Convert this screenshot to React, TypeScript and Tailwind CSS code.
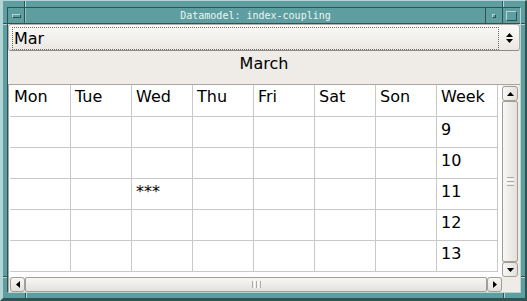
import React from 'react';

const days = ['Mon', 'Tue', 'Wed', 'Thu', 'Fri', 'Sat', 'Son', 'Week'];
const weeks = [9, 10, 11, 12, 13];

function UpArrow() {
  return (
    <svg width="7" height="4" viewBox="0 0 7 4" className="block">
      <path d="M0 4 L3.5 0 L7 4 Z" fill="#000" />
    </svg>
  );
}
function DownArrow() {
  return (
    <svg width="7" height="4" viewBox="0 0 7 4" className="block">
      <path d="M0 0 L3.5 4 L7 0 Z" fill="#000" />
    </svg>
  );
}
function LeftArrow() {
  return (
    <svg width="4" height="7" viewBox="0 0 4 7" className="block">
      <path d="M4 0 L0 3.5 L4 7 Z" fill="#000" />
    </svg>
  );
}
function RightArrow() {
  return (
    <svg width="4" height="7" viewBox="0 0 4 7" className="block">
      <path d="M0 0 L4 3.5 L0 7 Z" fill="#000" />
    </svg>
  );
}

export default function App() {
  return (
    <div className="relative w-[527px] h-[301px] overflow-hidden bg-[#5f9ea0] border-t border-l-[3px] border-r-2 border-b-[3px] border-t-[#b4d5d6] border-l-[#b4d5d6] border-r-[#2f5354] border-b-[#2f5354] pt-[6px] pl-[4px] pr-[4px] pb-[5px] font-['DejaVu_Sans',sans-serif]">
      {/* frame corner grooves */}
      <span className="absolute left-[21px] top-[-1px] h-[7px] w-[1px] bg-[#2f5354]" />
      <span className="absolute left-[22px] top-[-1px] h-[7px] w-[1px] bg-[#b4d5d6]" />
      <span className="absolute left-[499px] top-[-1px] h-[7px] w-[1px] bg-[#2f5354]" />
      <span className="absolute left-[500px] top-[-1px] h-[7px] w-[1px] bg-[#b4d5d6]" />
      <span className="absolute left-[22px] bottom-[-3px] h-[8px] w-[1px] bg-[#2f5354]" />
      <span className="absolute left-[23px] bottom-[-3px] h-[8px] w-[1px] bg-[#b4d5d6]" />
      <span className="absolute left-[500px] bottom-[-3px] h-[8px] w-[1px] bg-[#2f5354]" />
      <span className="absolute left-[501px] bottom-[-3px] h-[8px] w-[1px] bg-[#b4d5d6]" />
      <span className="absolute left-[-3px] top-[22px] h-[1px] w-[7px] bg-[#2f5354]" />
      <span className="absolute left-[-3px] top-[23px] h-[1px] w-[7px] bg-[#b4d5d6]" />
      <span className="absolute left-[-3px] top-[275px] h-[1px] w-[7px] bg-[#2f5354]" />
      <span className="absolute left-[-3px] top-[276px] h-[1px] w-[7px] bg-[#b4d5d6]" />
      <span className="absolute right-[-2px] top-[22px] h-[1px] w-[6px] bg-[#2f5354]" />
      <span className="absolute right-[-2px] top-[23px] h-[1px] w-[6px] bg-[#b4d5d6]" />
      <span className="absolute right-[-2px] top-[275px] h-[1px] w-[6px] bg-[#2f5354]" />
      <span className="absolute right-[-2px] top-[276px] h-[1px] w-[6px] bg-[#b4d5d6]" />

      <div className="flex h-full flex-col border border-t-[#2f5354] border-l-[#2f5354] border-r-[#b4d5d6] border-b-[#b4d5d6]">
        {/* title bar */}
        <div className="flex h-[16px] shrink-0 border-b border-[#2f5354]">
          <div className="flex w-[17px] items-center justify-center border-r border-[#2f5354]">
            <div className="h-[4px] w-[9px] border border-t-[#b4d5d6] border-l-[#b4d5d6] border-r-[#2f5354] border-b-[#2f5354]" />
          </div>
          <div className="flex w-[460px] items-center justify-center border-l border-[#8fc0c2] font-['DejaVu_Sans_Mono',monospace] text-[10px] leading-none text-[#e8f6f6]">
            Datamodel: index-coupling
          </div>
          <div className="flex w-[17px] items-center justify-center border-l border-[#2f5354]">
            <div className="h-[4px] w-[4px] border border-t-[#b4d5d6] border-l-[#b4d5d6] border-r-[#2f5354] border-b-[#2f5354]" />
          </div>
          <div className="flex w-[18px] items-center justify-center border-l border-[#2f5354]">
            <div className="h-[10px] w-[11px] border border-t-[#b4d5d6] border-l-[#b4d5d6] border-r-[#2f5354] border-b-[#2f5354]" />
          </div>
        </div>

        {/* content */}
        <div className="flex flex-1 flex-col bg-[#efebe7] text-[16px] text-black">
          {/* combo */}
          <div className="flex h-[27px] shrink-0 items-start rounded-[3px] border border-[#b3afa8] border-b-[#8f8b85] bg-gradient-to-b from-[#fbfaf8] to-[#ebe8e3]">
            <div className="ml-[3px] mt-[2px] flex h-[23px] flex-1 items-center border border-dotted border-[#6a6a6a] pl-[1px] leading-[19px]">
              Mar
            </div>
            <div className="flex h-full w-[20px] flex-col items-center justify-center gap-[2px]">
              <UpArrow />
              <DownArrow />
            </div>
          </div>

          {/* month header */}
          <div className="flex h-[33px] shrink-0 justify-center pt-[3px] leading-[19px]">March</div>

          {/* table section */}
          <div className="grid flex-1 grid-cols-[493px_16px_1fr] grid-rows-[192px_15px] border-t border-l border-[#aaa69f]">
            {/* viewport */}
            <div className="overflow-hidden bg-white pl-[1px]">
              <div className="grid grid-cols-[repeat(8,61px)]">
                {days.map((d) => (
                  <div
                    key={d}
                    className="h-[32px] border-r border-b border-[#c8c8c8] pl-[4px] pt-[2px] leading-[19px]"
                  >
                    {d}
                  </div>
                ))}
                {weeks.map((w) =>
                  days.map((d) => (
                    <div
                      key={`${w}-${d}`}
                      className="h-[31px] border-r border-b border-[#c8c8c8] pl-[4px] pt-[3px] leading-[19px]"
                    >
                      {d === 'Week' ? w : w === 11 && d === 'Wed' ? '***' : ''}
                    </div>
                  ))
                )}
              </div>
            </div>

            {/* vertical scrollbar */}
            <div className="flex flex-col pt-[1px]">
              <div className="flex h-[15px] shrink-0 items-center justify-center rounded-[3px] border border-[#a29e97] bg-gradient-to-r from-[#f8f7f5] to-[#e4e1dc]">
                <UpArrow />
              </div>
              <div className="flex flex-1 flex-col items-center justify-center gap-[1px] rounded-[2px] border border-[#a29e97] bg-gradient-to-r from-[#f8f7f5] to-[#e4e1dc]">
                <div className="h-[1px] w-[7px] bg-[#b0aca5]" />
                <div className="h-[1px] w-[7px] bg-white" />
                <div className="h-[1px] w-[7px] bg-[#b0aca5]" />
                <div className="h-[1px] w-[7px] bg-white" />
                <div className="h-[1px] w-[7px] bg-[#b0aca5]" />
              </div>
              <div className="flex h-[15px] shrink-0 items-center justify-center rounded-[3px] border border-[#a29e97] bg-gradient-to-r from-[#f8f7f5] to-[#e4e1dc]">
                <DownArrow />
              </div>
            </div>
            <div />

            {/* horizontal scrollbar */}
            <div className="flex pl-[1px]">
              <div className="flex w-[15px] shrink-0 items-center justify-center rounded-[3px] border border-[#a29e97] bg-gradient-to-b from-[#f8f7f5] to-[#e4e1dc]">
                <LeftArrow />
              </div>
              <div className="flex flex-1 items-center justify-center gap-[1px] rounded-[2px] border border-[#a29e97] bg-gradient-to-b from-[#f8f7f5] to-[#e4e1dc]">
                <div className="h-[7px] w-[1px] bg-[#b0aca5]" />
                <div className="h-[7px] w-[1px] bg-white" />
                <div className="h-[7px] w-[1px] bg-[#b0aca5]" />
                <div className="h-[7px] w-[1px] bg-white" />
                <div className="h-[7px] w-[1px] bg-[#b0aca5]" />
              </div>
              <div className="flex w-[15px] shrink-0 items-center justify-center rounded-[3px] border border-[#a29e97] bg-gradient-to-b from-[#f8f7f5] to-[#e4e1dc]">
                <RightArrow />
              </div>
            </div>
            <div />
            <div />
          </div>
        </div>
      </div>
    </div>
  );
}
